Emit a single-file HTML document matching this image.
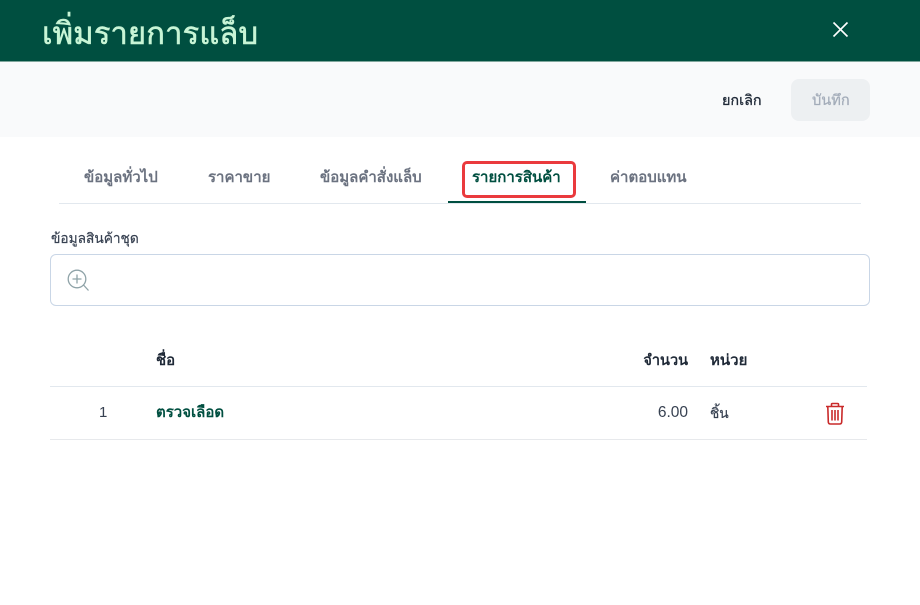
<!DOCTYPE html>
<html lang="th">
<head>
<meta charset="utf-8">
<style>
html,body{margin:0;padding:0;width:920px;height:605px;overflow:hidden;background:#fff;font-family:"Liberation Sans","Noto Sans CJK JP",sans-serif;}
.a{position:absolute;white-space:nowrap;line-height:20px;}
#h{position:absolute;left:0;top:0;width:920px;height:61px;background:#004f40;border-bottom:1px solid #7fa69c;box-sizing:content-box;}
#b{position:absolute;left:0;top:62px;width:920px;height:75px;background:#f9fafb;}
#save{position:absolute;left:791px;top:79px;width:79px;height:42px;border-radius:8px;background:#edf0f2;}
.tab{font-size:15px;font-weight:700;color:#6b7280;}
#line{position:absolute;left:59px;top:203px;width:802px;height:1px;background:#e2e8ee;}
#act{position:absolute;left:448px;top:201px;width:138px;height:2px;background:#004f40;}
#red{position:absolute;left:462px;top:161px;width:114px;height:37px;box-sizing:border-box;border:3px solid #ea3a3d;border-radius:5px;}
#inp{position:absolute;left:50px;top:254px;width:820px;height:52px;box-sizing:border-box;border:1px solid #c9d6e6;border-radius:6px;}
.hr{position:absolute;left:50px;width:817px;height:1px;}
</style>
</head>
<body>
<div id="h"></div>
<div class="a" style="left:42px;top:14px;line-height:40px;font-size:31.15px;color:#c8f5d6;-webkit-text-stroke:.55px #c8f5d6;">เพิ่มรายการแล็บ</div>
<svg style="position:absolute;left:832px;top:21px" width="17" height="17" viewBox="0 0 17 17"><path d="M1.5 1.5L15.5 15.5M15.5 1.5L1.5 15.5" stroke="#fff" stroke-width="1.6" fill="none"/></svg>
<div id="b"></div>
<div class="a" style="left:722px;top:91px;font-size:14.4px;color:#1f2937;-webkit-text-stroke:.3px #1f2937;">ยกเลิก</div>
<div id="save"></div>
<div class="a" style="left:812px;top:91px;font-size:14.6px;color:#a3acb9;-webkit-text-stroke:.25px #a3acb9;">บันทึก</div>

<div class="a tab" style="left:84px;top:168px;">ข้อมูลทั่วไป</div>
<div class="a tab" style="left:208px;top:168px;">ราคาขาย</div>
<div class="a tab" style="left:320px;top:168px;">ข้อมูลคำสั่งแล็บ</div>
<div class="a tab" style="left:472px;top:168px;color:#004f40;">รายการสินค้า</div>
<div class="a tab" style="left:610px;top:168px;">ค่าตอบแทน</div>
<div id="line"></div><div id="act"></div><div id="red"></div>

<div class="a" style="left:51px;top:229px;font-size:13.7px;color:#374151;-webkit-text-stroke:.2px #374151;">ข้อมูลสินค้าชุด</div>
<div id="inp"></div>
<svg style="position:absolute;left:67px;top:269px" width="23" height="23" viewBox="0 0 23 23" fill="none" stroke="#8fa3a8" stroke-width="1.3"><circle cx="10" cy="10" r="8.8"/><path d="M10 5.5V14.5M5.5 10H14.5M16.5 16L21.5 21.5"/></svg>

<div class="a" style="left:156px;top:351px;font-size:15px;font-weight:700;color:#1f2937;">ชื่อ</div>
<div class="a" style="right:232px;top:351px;font-size:14.5px;font-weight:700;color:#1f2937;">จำนวน</div>
<div class="a" style="left:710px;top:351px;font-size:15px;font-weight:700;color:#1f2937;">หน่วย</div>
<div class="hr" style="top:386px;background:#e2e8ee;"></div>
<div class="a" style="left:99px;top:403px;font-size:15px;color:#374151;">1</div>
<div class="a" style="left:156px;top:403px;font-size:15px;font-weight:700;color:#004f40;">ตรวจเลือด</div>
<div class="a" style="right:232px;top:403px;font-size:15.5px;color:#374151;">6.00</div>
<div class="a" style="left:710px;top:404px;font-size:13.7px;color:#374151;-webkit-text-stroke:.2px #374151;">ชิ้น</div>
<svg style="position:absolute;left:825px;top:402px" width="20" height="23" viewBox="0 0 20 23" fill="none" stroke="#c92a2a" stroke-width="1.6"><path d="M1 4.5H19M6.5 4V2.2Q6.5 1.5 7.5 1.5H12.5Q13.5 1.5 13.5 2.2V4M2.8 4.5L3.3 20Q3.4 22 5.5 22H14.5Q16.6 22 16.7 20L17.2 4.5M7 8V18.5M10 8V18.5M13 8V18.5"/></svg>
<div class="hr" style="top:439px;background:#e7e9ec;"></div>
</body>
</html>
